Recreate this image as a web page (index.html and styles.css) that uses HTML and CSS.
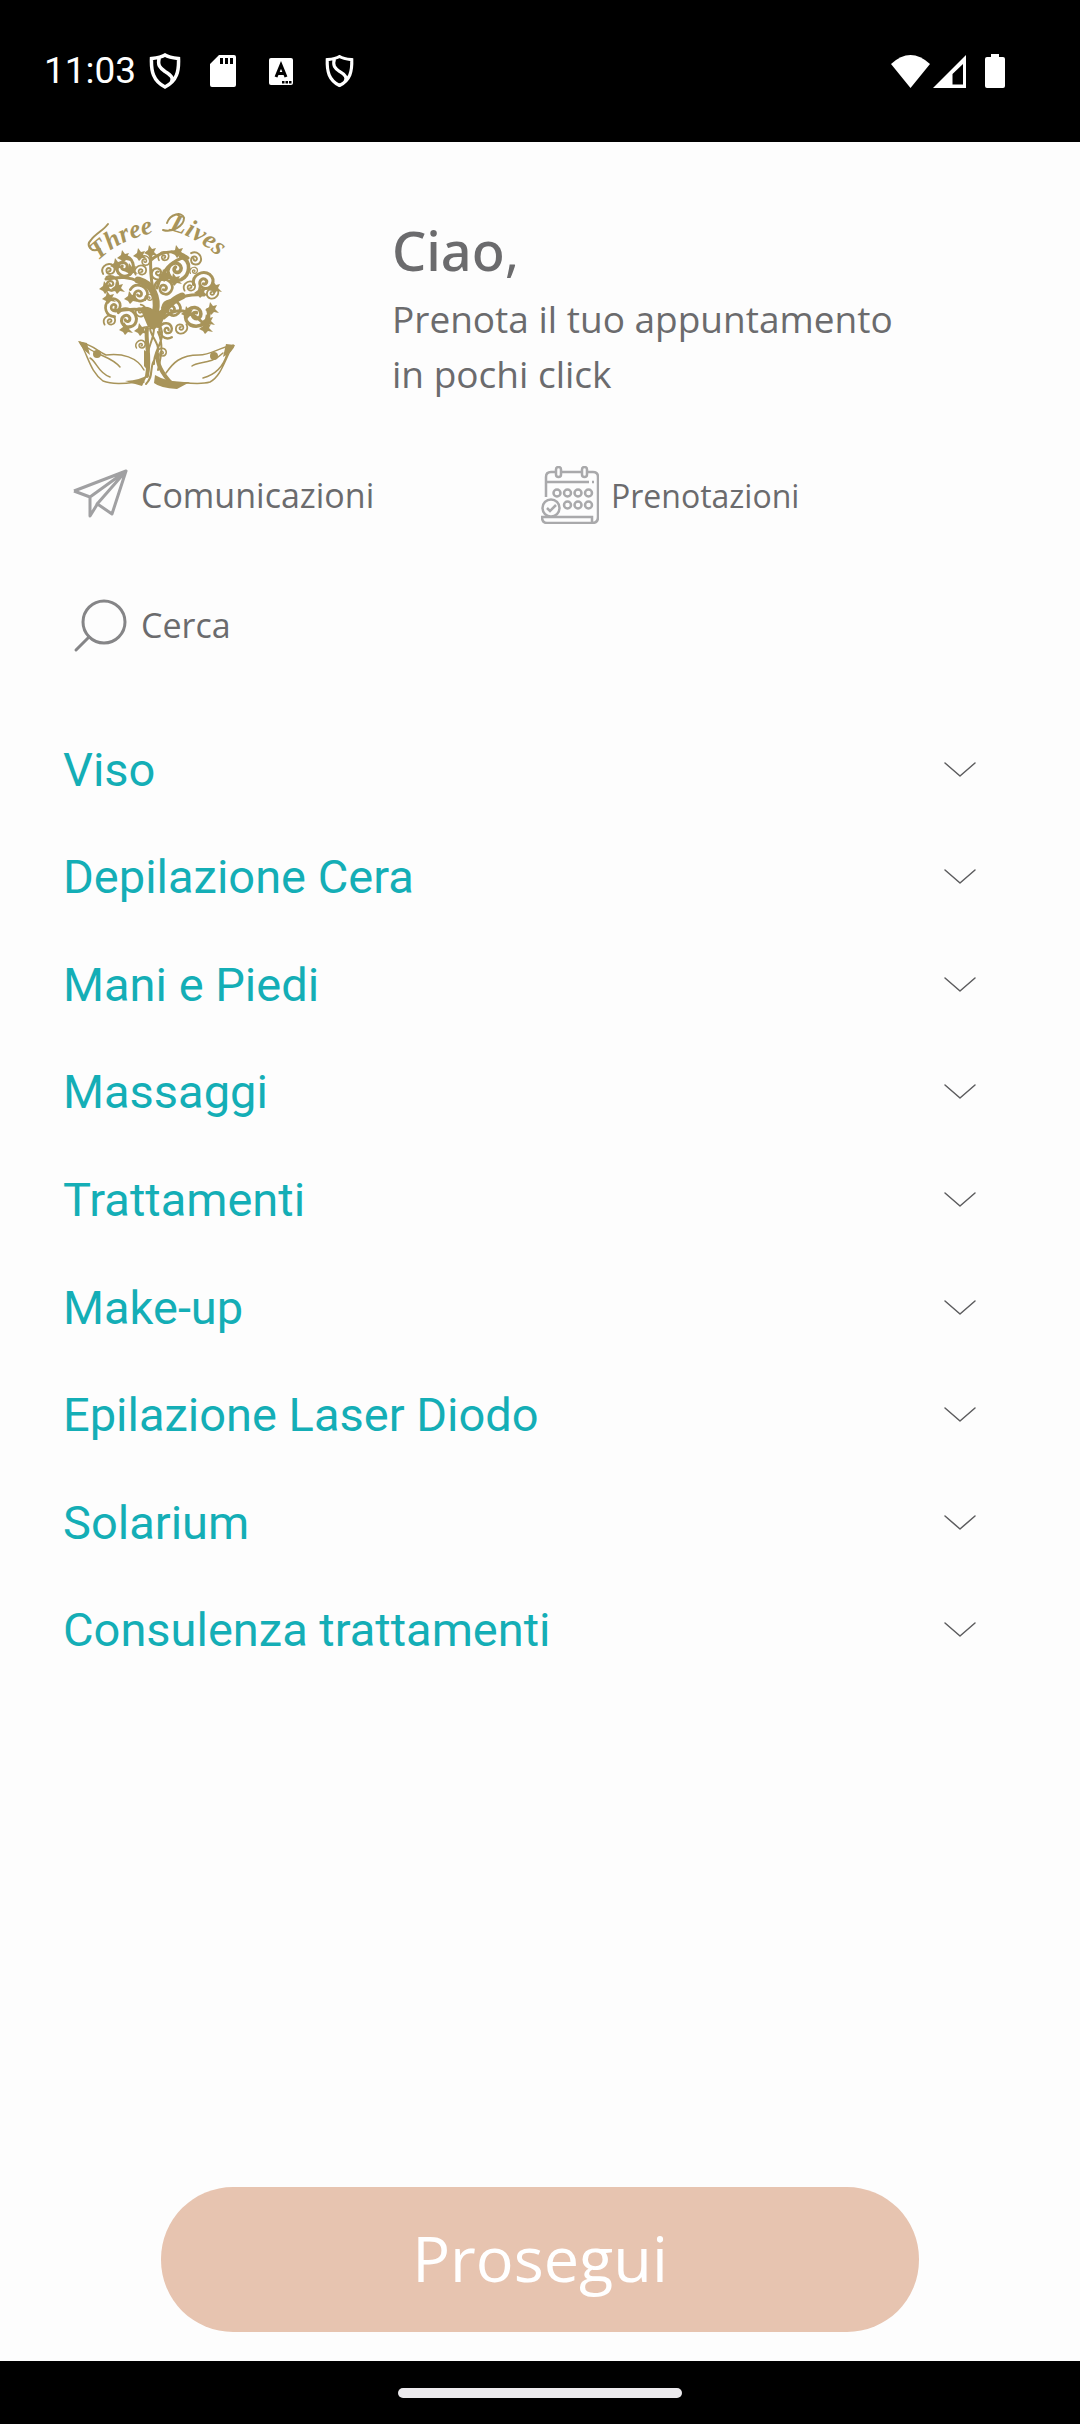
FILE: index.html
```html
<!DOCTYPE html>
<html lang="it">
<head>
<meta charset="utf-8">
<meta name="viewport" content="width=device-width, initial-scale=1">
<title>Three Lives</title>
<link rel="stylesheet" href="styles.css">
</head>
<body>
<svg class="defs" aria-hidden="true">
  <defs>
    <symbol id="chevron" viewBox="0 0 34 18"><path d="M2 2 17 15 32 2" fill="none" stroke="#5c5c5e" stroke-width="1.5" stroke-linecap="round" stroke-linejoin="round"/></symbol>
    <symbol id="shield" viewBox="0 0 32 36"><path d="M16 2C12 4.500 7 5 2.500 5.500 2 18 4 28 16 34 28 28 30 18 29.500 5.500 25 5 20 4.500 16 2ZM10.500 4.500C8 12 11 15 16 18.500 22 22 25 25 22 30" fill="none" stroke="#fff" stroke-width="3.500"/></symbol>
    <path id="curl" d="M-9 6C-14-3-5-11 3-9 11-6 10 5 2 6-5 6-6-3 0-3 4-2 3 2 0 2" fill="none"/>
    <path id="leaf" d="M-7 1-3-2-2-7 1-3 5-4 3 0 7 4 2 3-1 6-3 3Z"/>
  </defs>
</svg>
<div class="app">
  <div class="status">
    <span class="clock">11:03</span>
    <svg class="ic shield-lg" viewBox="0 0 32 36"><use href="#shield"/></svg>
    <svg class="ic sd" viewBox="0 0 26 32"><path fill="#fff" fill-rule="evenodd" d="M9 0H24Q26 0 26 2V30Q26 32 24 32H2Q0 32 0 30V9ZM10 3V9H13V3ZM15 3V9H18V3ZM20 3V9H23V3Z"/></svg>
    <svg class="ic letter" viewBox="0 0 24 27"><rect width="24" height="27" rx="2" fill="#fff"/><path d="M7 19 12 7 17 19M9 15.500H15" fill="none" stroke="#000" stroke-width="3"/><path d="M13 23h2.500v2.500H13zM16.500 23H19v2.500h-2.500zM20 23h2.500v2.500H20z"/></svg>
    <svg class="ic shield-sm" viewBox="0 0 32 36"><use href="#shield"/></svg>
    <span class="spacer"></span>
    <svg class="ic wifi" viewBox="0 0 39 33"><path fill="#fff" d="M0 9Q19.500-9 39 9L19.500 33Z"/></svg>
    <svg class="ic signal" viewBox="0 0 33 33"><path fill="#fff" fill-rule="evenodd" d="M33 0V33H0ZM30 9 19.500 19V29.500H30Z"/></svg>
    <svg class="ic battery" viewBox="0 0 20 34"><path fill="#fff" d="M6 0H14V3H18Q20 3 20 5V32Q20 34 18 34H2Q0 34 0 32V5Q0 3 2 3H6Z"/></svg>
  </div>

  <main class="content">
    <header class="intro">
      <svg class="logo" viewBox="3 0 200 200" role="img" aria-label="Three Lives">
        <path id="arcA" d="M38 61Q60 39 98 32" fill="none"/>
        <path id="arcB" d="M109 30Q136 36 162 60" fill="none"/>
        <g class="script"><text><textPath href="#arcA">Three</textPath></text><text><textPath href="#arcB">Lives</textPath></text></g>
        <g fill="none" stroke="#a8945a" stroke-linecap="round" stroke-linejoin="round">
          <path stroke-width="2" d="M40 49C30 53 26 45 31 40 36 33 43 31 48 24M103 30C112 33 124 26 124 18 122 11 110 14 107 23"/>
          <path stroke-width="7" d="M93 126C95 112 98 106 95 96 91 84 84 82 78 80M98 124C102 110 112 100 122 96"/>
          <path stroke-width="3" d="M95 98C90 80 90 66 91 52M80 82C66 75 56 78 46 79M92 116C78 104 66 112 54 110M100 114C112 100 122 93 144 95M104 118C116 106 130 110 142 122M97 88C102 70 112 60 126 57M91 60C104 49 118 50 128 58"/>
          <g stroke-width="3">
            <use href="#curl" transform="translate(49 70) scale(.65)"/>
            <use href="#curl" transform="translate(64 67) rotate(120)"/>
            <use href="#curl" transform="translate(81 71) scale(.6)"/>
            <use href="#curl" transform="translate(85 61) scale(.5) rotate(90)"/>
            <use href="#curl" transform="translate(98 73) scale(.7) rotate(200)"/>
            <use href="#curl" transform="translate(104 88) scale(.9) rotate(30)"/>
            <use href="#curl" transform="translate(104 57) scale(.55)"/>
            <use href="#curl" transform="translate(117 69) scale(1.200) rotate(140)"/>
            <use href="#curl" transform="translate(130 87) scale(.6)"/>
            <use href="#curl" transform="translate(135 59) scale(.65) rotate(90)"/>
            <use href="#curl" transform="translate(134 71) scale(.4)"/>
            <use href="#curl" transform="translate(144 82) rotate(20)"/>
            <use href="#curl" transform="translate(152 93) scale(.6) rotate(180)"/>
            <use href="#curl" transform="translate(51 84) scale(.75) rotate(90)"/>
            <use href="#curl" transform="translate(54 107) scale(.9) rotate(300)"/>
            <use href="#curl" transform="translate(50 121) scale(.6)"/>
            <use href="#curl" transform="translate(79 94) scale(.9) rotate(60)"/>
            <use href="#curl" transform="translate(89 98) scale(.4)"/>
            <use href="#curl" transform="translate(67 119) rotate(70)"/>
            <use href="#curl" transform="translate(112 109) scale(.9) rotate(40)"/>
            <use href="#curl" transform="translate(121 128) scale(.6) rotate(180)"/>
            <use href="#curl" transform="translate(107 130) scale(.8) rotate(270)"/>
            <use href="#curl" transform="translate(136 115) scale(1.200) rotate(190)"/>
            <use href="#curl" transform="translate(81 145) scale(.5)"/>
            <use href="#curl" transform="translate(102 153) scale(.5)"/>
            <use href="#curl" transform="translate(80 111) scale(.6) rotate(130)"/>
          </g>
          <path stroke-width="4" d="M87 128C85 143 91 155 87 176M98 155C96 162 102 174 112 184"/>
          <path stroke-width="2" d="M90 128C90 137 103 145 96 157 88 167 95 175 86 184M101 128C106 140 93 151 94 164M94 128C94 141 86 148 88 160M98 132C104 145 101 157 98 170"/>
          <path stroke-width="1.500" d="M20 142C29 158 30 171 43 181 54 185 68 183 84 182M22 143C33 145 37 151 46 155 62 153 77 157 84 170M28 148C39 156 52 157 60 167M30 158C37 162 38 173 50 177M173 145C164 162 161 176 150 182 137 186 119 181 109 182M171 146C160 147 151 155 139 155 120 155 113 163 106 173M163 153C151 165 138 161 132 166M167 154C163 168 154 175 143 178"/>
        </g>
        <g fill="#a8945a">
          <path d="M18 141 27 143 30 155Q22 149 18 141ZM175 145 166 144 163 157Q173 152 175 145Z"/>
          <circle cx="37" cy="154" r="4"/><circle cx="154" cy="156" r="4"/>
          <path d="M80 108Q88 104 96 112L106 108 100 128 88 127ZM84 150 90 154 89 172 84 166ZM65 181Q82 180 88 174L82 186ZM95 175Q108 183 130 182L117 189Q100 188 94 183Z"/>
          <use href="#leaf" x="64" y="57"/><use href="#leaf" x="57" y="65"/><use href="#leaf" x="71" y="70"/>
          <use href="#leaf" x="91" y="52"/><use href="#leaf" x="80" y="55"/><use href="#leaf" x="118" y="52"/>
          <use href="#leaf" x="46" y="88"/><use href="#leaf" x="49" y="98"/><use href="#leaf" x="58" y="88"/>
          <use href="#leaf" x="71" y="98"/><use href="#leaf" x="66" y="129"/>
          <use href="#leaf" x="105" y="76"/><use href="#leaf" x="115" y="80"/>
          <use href="#leaf" x="155" y="88"/><use href="#leaf" x="141" y="92"/>
          <use href="#leaf" x="152" y="109"/><use href="#leaf" x="148" y="121"/><use href="#leaf" x="146" y="128"/>
          <use href="#leaf" x="128" y="113"/><use href="#leaf" x="81" y="130"/>
        </g>
      </svg>
      <div class="greeting">
        <h1>Ciao<span>,</span></h1>
        <p>Prenota il tuo appuntamento<br>in pochi click</p>
      </div>
    </header>

    <nav class="links">
      <a href="#comunicazioni"><svg viewBox="0 0 58 58"><path d="M3 25 55 5 41 48 25 37M3 25 19 31V50L27 37 55 5 19 31" fill="none" stroke="#a0a0a2" stroke-width="3" stroke-linejoin="round"/></svg><span>Comunicazioni</span></a>
      <a class="bookings" href="#prenotazioni"><svg viewBox="0 0 58 58"><g fill="none" stroke="#a9a9ab" stroke-width="2.500"><path d="M5 31V11Q5 6 10 6H14M20 6H40M46 6H52Q57 6 57 11V51Q57 57 51 57H6Q1 57 1 51H51V57M5 16H48M51 16H53M20 51H31"/><rect x="15" y="1" width="5" height="10" rx="2.500"/><rect x="41" y="1" width="5" height="10" rx="2.500"/><circle cx="16" cy="27" r="3.500"/><circle cx="26.500" cy="27" r="3.500"/><circle cx="37" cy="27" r="3.500"/><circle cx="47.500" cy="27" r="3.500"/><circle cx="26.500" cy="39" r="3.500"/><circle cx="37" cy="39" r="3.500"/><circle cx="47.500" cy="39" r="3.500"/><circle cx="10" cy="42" r="8.500" fill="#fdfdfd"/><path d="m6 42 3 3 6-6"/></g></svg><span>Prenotazioni</span></a>
      <a href="#cerca"><svg viewBox="0 0 58 58"><g fill="none" stroke="#858587" stroke-width="3" stroke-linecap="round"><circle cx="33" cy="26" r="21"/><path d="M18 41 5 54"/></g></svg><span>Cerca</span></a>
    </nav>

    <div class="categories">
      <button type="button">Viso<svg><use href="#chevron"/></svg></button>
      <button type="button">Depilazione Cera<svg><use href="#chevron"/></svg></button>
      <button type="button">Mani e Piedi<svg><use href="#chevron"/></svg></button>
      <button type="button">Massaggi<svg><use href="#chevron"/></svg></button>
      <button type="button">Trattamenti<svg><use href="#chevron"/></svg></button>
      <button type="button">Make-up<svg><use href="#chevron"/></svg></button>
      <button type="button">Epilazione Laser Diodo<svg><use href="#chevron"/></svg></button>
      <button type="button">Solarium<svg><use href="#chevron"/></svg></button>
      <button type="button">Consulenza trattamenti<svg><use href="#chevron"/></svg></button>
    </div>

    <button class="proceed" type="button">Prosegui</button>
  </main>

  <div class="gesture"><span></span></div>
</div>
</body>
</html>
```
FILE: styles.css
```css
* { box-sizing: border-box; }

body {
  margin: 0;
  background: #fdfdfd;
  color: #6b6b6d;
  font-family: "Open Sans", "Noto Sans", sans-serif;
}

button {
  border: 0;
  padding: 0;
  background: none;
  cursor: pointer;
}

.defs { position: absolute; width: 0; height: 0; }

.app {
  display: flex;
  flex-direction: column;
  min-height: 100vh;
}

/* Status bar */
.status {
  display: flex;
  align-items: center;
  height: 142px;
  padding: 0 75px 0 44px;
  background: #000;
  color: #fff;
}
.clock { font: 37px/44px Roboto, sans-serif; }
.ic { flex: none; }
.shield-lg { width: 32px; height: 36px; margin-left: 13px; }
.sd { width: 26px; height: 32px; margin-left: 29px; }
.letter { width: 24px; height: 27px; margin-left: 33px; }
.shield-sm { width: 29px; height: 34px; margin-left: 32px; }
.spacer { flex: 1; }
.wifi { width: 39px; height: 33px; }
.signal { width: 33px; height: 33px; margin-left: 3px; }
.battery { width: 20px; height: 34px; margin-left: 19px; }

/* Main area */
.content {
  flex: 1;
  display: flex;
  flex-direction: column;
  padding: 58px 63px 29px;
}

.intro { display: flex; }
.logo { flex: none; width: 200px; height: 200px; }
.script {
  fill: #a8945a;
  font: italic bold 26px "Liberation Serif", serif;
}
.greeting { padding: 14px 0 0 129px; }
.greeting h1 {
  margin: 0;
  font-family: "Noto Sans", "Open Sans", sans-serif;
  font-size: 54px;
  line-height: 72px;
  font-weight: 500;
}
.greeting h1 span { font-weight: 400; }
.greeting p {
  margin: 5px 0 0;
  font-size: 37px;
  line-height: 55px;
}

.links {
  display: grid;
  grid-template-columns: 470px 1fr;
  row-gap: 70px;
  margin-top: 64px;
  padding-left: 8px;
}
.links a {
  display: flex;
  align-items: center;
  gap: 12px;
  height: 60px;
  color: inherit;
  font-size: 34px;
  text-decoration: none;
}
.links svg { width: 58px; height: 58px; }
.links .bookings { font-size: 32px; }

.categories {
  display: grid;
  grid-auto-rows: 1fr;
  min-height: 968px;
  margin: 61px 40px 0 0;
}
.categories button {
  display: flex;
  align-items: center;
  justify-content: space-between;
  color: #14aeb6;
  font: 47px/56px Roboto, sans-serif;
  text-align: left;
}
.categories svg { width: 34px; height: 18px; }

.proceed {
  align-self: center;
  width: 758px;
  max-width: 100%;
  height: 145px;
  margin-top: auto;
  padding-bottom: 3px;
  border-radius: 72px;
  background: #e7c4b0;
  color: #fff;
  font: 63px/88px "Open Sans", "Noto Sans", sans-serif;
}

/* Gesture bar */
.gesture {
  display: flex;
  justify-content: center;
  align-items: center;
  height: 63px;
  background: #000;
}
.gesture span {
  width: 284px;
  height: 10px;
  border-radius: 5px;
  background: #eceaed;
}
```
